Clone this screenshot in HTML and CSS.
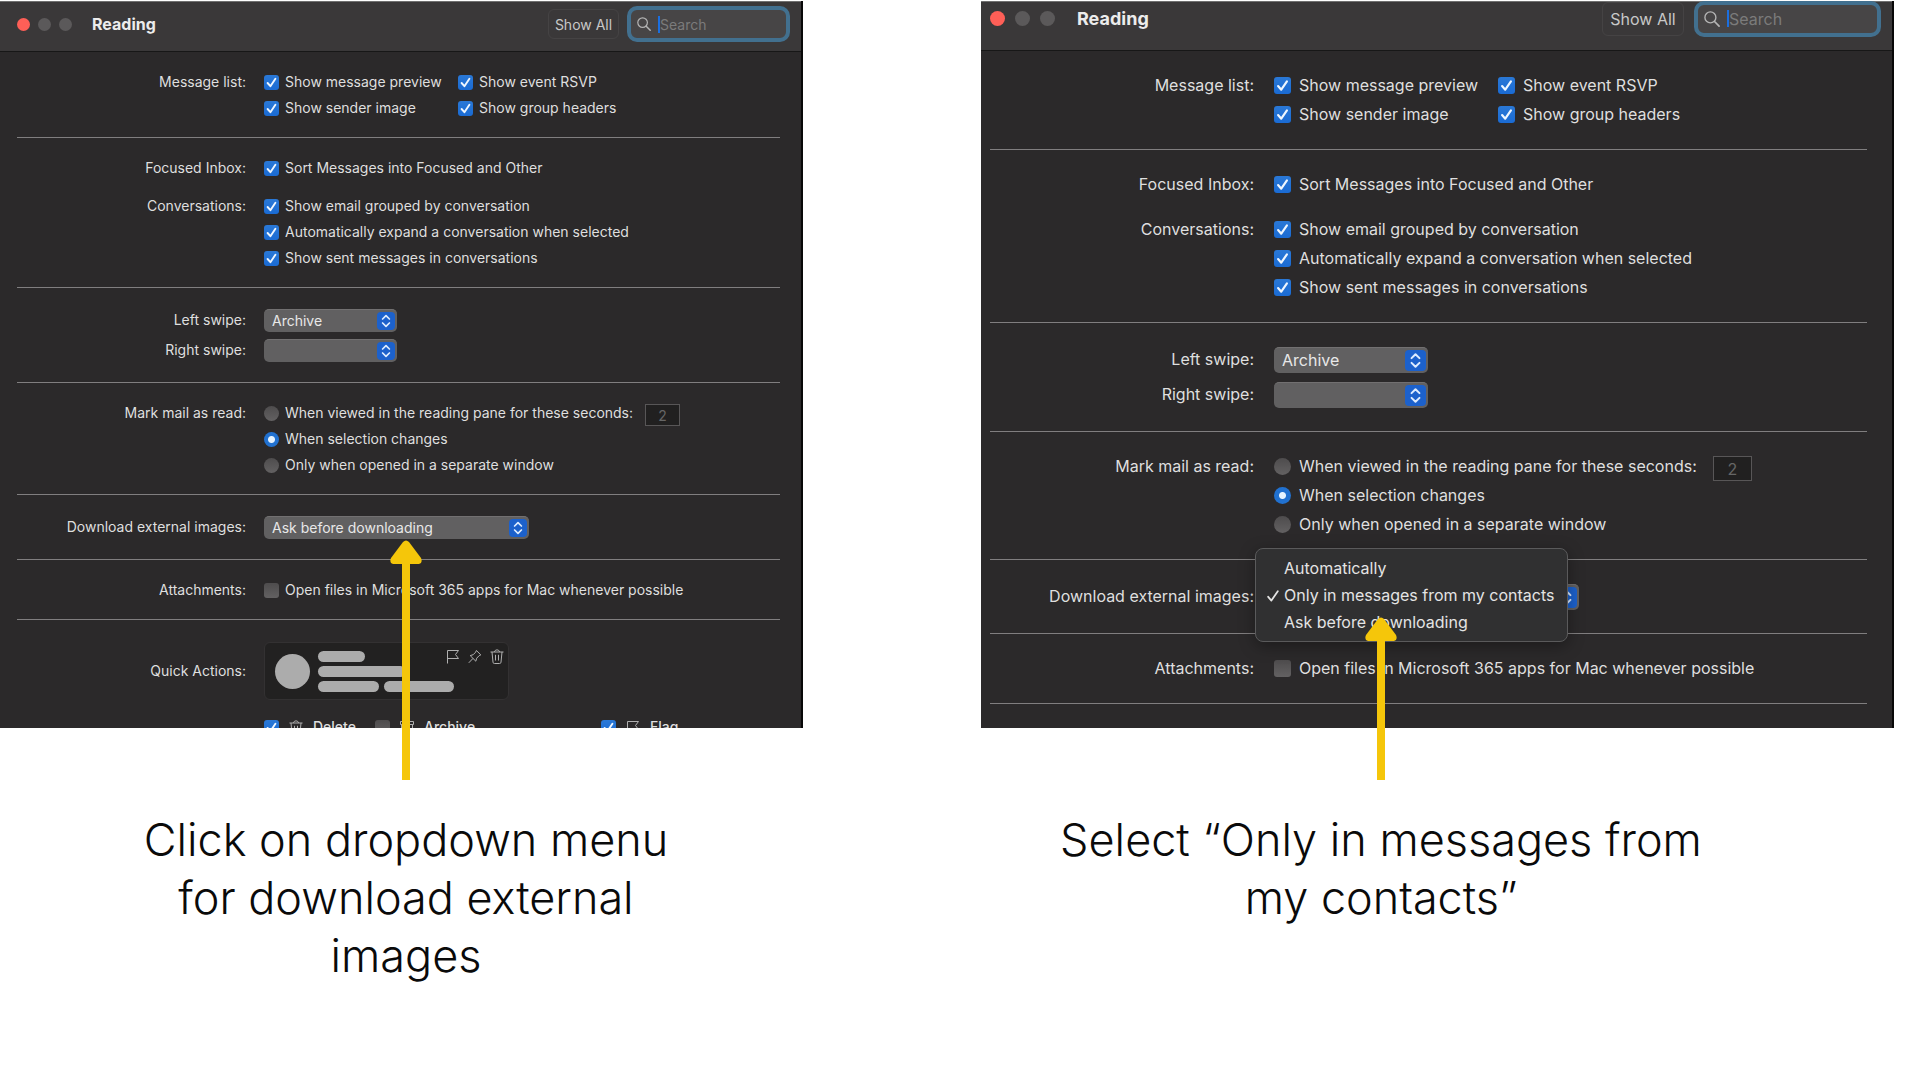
FILE: index.html
```html
<!DOCTYPE html>
<html lang="en">
<head>
  <meta charset="UTF-8">
  <title>Download external images</title>
  <meta name="viewport" content="width=device-width, initial-scale=1.0">
  <link rel="stylesheet" href="styles.css">
</head>
<body>
  <!-- shared icons -->
  <svg class="defs" width="0" height="0" aria-hidden="true">
    <symbol id="arrows" viewBox="0 0 18 18">
      <path d="M5.6 7 9 3.6 12.4 7M5.6 11 9 14.4 12.4 11" fill="none" stroke="#dcebff" stroke-width="1.7" stroke-linecap="round" stroke-linejoin="round"/>
    </symbol>
    <symbol id="glass" viewBox="0 0 14 14">
      <circle cx="5.6" cy="5.6" r="4.8" fill="none" stroke="#b4b4b4" stroke-width="1.2"/>
      <path d="M9.2 9.2 13.2 13.2" stroke="#b4b4b4" stroke-width="1.5" stroke-linecap="round"/>
    </symbol>
    <symbol id="flag" viewBox="0 0 14 15">
      <path d="M1.5 14.5V1.5H12.5L9.5 5.5 12.5 9.5H1.5" fill="none" stroke="#b0b0b0" stroke-width="1"/>
    </symbol>
    <symbol id="pin" viewBox="0 0 14 15">
      <path d="M8.4 1.5 12.8 5.9 11.2 6.6 8.7 9.2 7.8 12.2 2.2 6.6 5.2 5.7 7.7 3.1ZM5 9.4.8 13.8" fill="none" stroke="#b0b0b0" stroke-width="1" stroke-linejoin="round"/>
    </symbol>
    <symbol id="trash" viewBox="0 0 14 15">
      <path d="M.5 3H13.5M4.5 3C4.5.2 9.5.2 9.5 3M2 3 3 13.2Q3.1 14.5 4.4 14.5H9.6Q10.9 14.5 11 13.2L12 3M5.5 5.8V11.5M8.5 5.8V11.5" fill="none" stroke="#b0b0b0" stroke-width="1"/>
    </symbol>
    <symbol id="box" viewBox="0 0 14 15">
      <path d="M.5 1.5H13.5V4.5H.5ZM1.5 4.5V13.5H12.5V4.5M5 7.5H9" fill="none" stroke="#b0b0b0" stroke-width="1"/>
    </symbol>
  </svg>

  <main class="steps">
    <section class="step step-open">
      <div class="window">
        <header class="titlebar">
          <span class="dot close"></span><span class="dot"></span><span class="dot"></span>
          <h2>Reading</h2>
          <button type="button" class="show-all">Show All</button>
          <label class="search">
            <svg class="glass"><use href="#glass"/></svg>
            <span class="caret"></span>
            <input type="text" placeholder="Search" aria-label="Search">
          </label>
        </header>

        <div class="settings">
          <div class="group">
            <span class="name">Message list:</span>
            <div class="options two">
              <label><input type="checkbox" checked>Show message preview</label>
              <label><input type="checkbox" checked>Show event RSVP</label>
              <label><input type="checkbox" checked>Show sender image</label>
              <label><input type="checkbox" checked>Show group headers</label>
            </div>
          </div>

          <div class="group">
            <span class="name">Focused Inbox:</span>
            <div class="options">
              <label><input type="checkbox" checked>Sort Messages into Focused and Other</label>
            </div>
            <span class="name">Conversations:</span>
            <div class="options">
              <label><input type="checkbox" checked>Show email grouped by conversation</label>
              <label><input type="checkbox" checked>Automatically expand a conversation when selected</label>
              <label><input type="checkbox" checked>Show sent messages in conversations</label>
            </div>
          </div>

          <div class="group popups">
            <label class="name" for="left-a">Left swipe:</label>
            <span class="popup"><select id="left-a"><option>Archive</option></select><svg class="arrows"><use href="#arrows"/></svg></span>
            <label class="name" for="right-a">Right swipe:</label>
            <span class="popup"><select id="right-a"><option></option></select><svg class="arrows"><use href="#arrows"/></svg></span>
          </div>

          <div class="group">
            <span class="name">Mark mail as read:</span>
            <div class="options">
              <div class="line">
                <label><input type="radio" name="read-a">When viewed in the reading pane for these seconds:</label>
                <input type="text" class="seconds" value="2" aria-label="Seconds" disabled>
              </div>
              <label><input type="radio" name="read-a" checked>When selection changes</label>
              <label><input type="radio" name="read-a">Only when opened in a separate window</label>
            </div>
          </div>

          <div class="group popups">
            <label class="name" for="images-a">Download external images:</label>
            <span class="popup wide"><select id="images-a"><option>Ask before downloading</option></select><svg class="arrows"><use href="#arrows"/></svg></span>
          </div>

          <div class="group">
            <span class="name">Attachments:</span>
            <div class="options">
              <label><input type="checkbox">Open files in Microsoft 365 apps for Mac whenever possible</label>
            </div>
          </div>

          <div class="group quick">
            <span class="name">Quick Actions:</span>
            <div class="preview">
              <span class="avatar"></span>
              <span class="bars"><i class="short"></i><i class="long"></i><span><i class="mid"></i><i class="last"></i></span></span>
              <span class="actions">
                <svg class="icon"><use href="#flag"/></svg>
                <svg class="icon"><use href="#pin"/></svg>
                <svg class="icon"><use href="#trash"/></svg>
              </span>
            </div>
            <div class="cut">
              <label><input type="checkbox" checked><svg class="icon"><use href="#trash"/></svg>Delete</label>
              <label><input type="checkbox"><svg class="icon"><use href="#box"/></svg>Archive</label>
              <label><input type="checkbox" checked><svg class="icon"><use href="#flag"/></svg>Flag</label>
            </div>
          </div>
        </div>
      </div>
      <svg class="pointer" viewBox="0 0 32 240">
        <path d="M12 240V24H3Q-1 23 1 18L13 2Q16-1 19 2L31 18Q33 23 29 24H20V240Z" fill="#f5c60a"/>
      </svg>
      <p class="caption">Click on dropdown menu<br>for download external<br>images</p>
    </section>

    <section class="step step-select">
      <div class="window">
        <header class="titlebar">
          <span class="dot close"></span><span class="dot"></span><span class="dot"></span>
          <h2>Reading</h2>
          <button type="button" class="show-all">Show All</button>
          <label class="search">
            <svg class="glass"><use href="#glass"/></svg>
            <span class="caret"></span>
            <input type="text" placeholder="Search" aria-label="Search">
          </label>
        </header>

        <div class="settings">
          <div class="group">
            <span class="name">Message list:</span>
            <div class="options two">
              <label><input type="checkbox" checked>Show message preview</label>
              <label><input type="checkbox" checked>Show event RSVP</label>
              <label><input type="checkbox" checked>Show sender image</label>
              <label><input type="checkbox" checked>Show group headers</label>
            </div>
          </div>

          <div class="group">
            <span class="name">Focused Inbox:</span>
            <div class="options">
              <label><input type="checkbox" checked>Sort Messages into Focused and Other</label>
            </div>
            <span class="name">Conversations:</span>
            <div class="options">
              <label><input type="checkbox" checked>Show email grouped by conversation</label>
              <label><input type="checkbox" checked>Automatically expand a conversation when selected</label>
              <label><input type="checkbox" checked>Show sent messages in conversations</label>
            </div>
          </div>

          <div class="group popups">
            <label class="name" for="left-b">Left swipe:</label>
            <span class="popup"><select id="left-b"><option>Archive</option></select><svg class="arrows"><use href="#arrows"/></svg></span>
            <label class="name" for="right-b">Right swipe:</label>
            <span class="popup"><select id="right-b"><option></option></select><svg class="arrows"><use href="#arrows"/></svg></span>
          </div>

          <div class="group">
            <span class="name">Mark mail as read:</span>
            <div class="options">
              <div class="line">
                <label><input type="radio" name="read-b">When viewed in the reading pane for these seconds:</label>
                <input type="text" class="seconds" value="2" aria-label="Seconds" disabled>
              </div>
              <label><input type="radio" name="read-b" checked>When selection changes</label>
              <label><input type="radio" name="read-b">Only when opened in a separate window</label>
            </div>
          </div>

          <div class="group popups">
            <label class="name" for="images-b">Download external images:</label>
            <div class="popup wide">
              <select id="images-b"><option></option></select><svg class="arrows"><use href="#arrows"/></svg>
              <ul class="menu" role="menu">
                <li role="menuitem">Automatically</li>
                <li role="menuitem" class="checked">
                  <svg class="tick" viewBox="0 0 12 12"><path d="M1.2 6.8 4.4 10.6 10.8 1.2" fill="none" stroke="#e4e4e4" stroke-width="1.8" stroke-linecap="round" stroke-linejoin="round"/></svg>
                  Only in messages from my contacts
                </li>
                <li role="menuitem">Ask before downloading</li>
              </ul>
            </div>
          </div>

          <div class="group">
            <span class="name">Attachments:</span>
            <div class="options">
              <label><input type="checkbox">Open files in Microsoft 365 apps for Mac whenever possible</label>
            </div>
          </div>
        </div>
      </div>
      <svg class="pointer" viewBox="0 0 32 163">
        <path d="M12 163V24H3Q-1 23 1 18L13 2Q16-1 19 2L31 18Q33 23 29 24H20V163Z" fill="#f5c60a"/>
      </svg>
      <p class="caption">Select “Only in messages from<br>my contacts”</p>
    </section>
  </main>
</body>
</html>
```
FILE: styles.css
```css
* {
  box-sizing: border-box;
}

body {
  margin: 0;
  background: #fff;
  font-family: Inter, "Liberation Sans", sans-serif;
}

.defs {
  display: block;
}

.steps {
  display: grid;
  grid-template-columns: 803fr 913fr;
  column-gap: 178px;
  padding: 1px 26px 0 0;
}

.step {
  position: relative;
  display: grid;
  grid-template-rows: 1fr auto;
}

/* left window */
.step-open {
  --text: 14px;
  --title: 16px;
  --bar: 51px;
  --bar-pad: 5px;
  --side: 17px;
  --right: 21px;
  --dot: 13px;
  --dot-gap: 8px;
  --label: 229px;
  --label-gap: 18px;
  --row: 22px;
  --row-gap: 4px;
  --group-gap: 16px;
  --pad-top: 19px;
  --pad-bottom: 18px;
  --popup-pad: 21px;
  --popup-gap: 8px;
  --popup: 133px;
  --popup-wide: 265px;
  --column: 194px;
  --check: 15px;
  --check-gap: 6px;
  --seconds-gap: 12px;
  --search: 163px;
  --button: 71px;
  --button-height: 30px;
  --mark: 406px;
  --pointer: 240px;
}

/* right window, a bit larger */
.step-select {
  --text: 16px;
  --title: 18px;
  --bar: 50px;
  --bar-pad: 15px;
  --side: 9px;
  --right: 25px;
  --dot: 15px;
  --dot-gap: 10px;
  --label: 264px;
  --label-gap: 20px;
  --row: 25px;
  --row-gap: 4px;
  --group-gap: 20px;
  --pad-top: 22px;
  --pad-bottom: 22px;
  --popup-pad: 24px;
  --popup-gap: 10px;
  --popup: 154px;
  --popup-wide: 305px;
  --column: 224px;
  --check: 17px;
  --check-gap: 8px;
  --seconds-gap: 16px;
  --search: 187px;
  --button: 82px;
  --button-height: 34px;
  --mark: 400px;
  --pointer: 163px;
}

.window {
  overflow: hidden;
  background: #2b292a;
  border-right: 2px solid #080808;
  color: #dfdfdf;
  font-size: var(--text);
}

.titlebar {
  display: flex;
  align-items: center;
  gap: var(--dot-gap);
  height: var(--bar);
  padding: 0 11px var(--bar-pad) var(--side);
  background: #3a3839;
  border-top: 1px solid #707070;
  border-bottom: 1px solid #171717;
}

.dot {
  width: var(--dot);
  height: var(--dot);
  border-radius: 50%;
  background: #5b595a;
}

.dot.close {
  background: #fe5f57;
}

.titlebar h2 {
  margin: 0 auto 0 12px;
  font-size: var(--title);
  font-weight: 700;
  color: #ececec;
}

.show-all {
  width: var(--button);
  height: var(--button-height);
  padding: 0;
  border: 1px solid #454344;
  border-radius: 6px;
  background: none;
  color: #c8c8c8;
  font: inherit;
}

.search {
  display: flex;
  align-items: center;
  width: var(--search);
  height: 36px;
  flex: none;
  padding-left: 6px;
  border: 4px solid #42708f;
  border-radius: 10px;
  background: #474546;
}

.glass {
  width: 14px;
  height: 14px;
  flex: none;
}

.step-select .glass {
  width: 16px;
  height: 16px;
}

.caret {
  width: 2px;
  height: 17px;
  margin-left: 7px;
  background: #1b6fe0;
}

.search input {
  flex: 1;
  min-width: 0;
  padding: 0;
  border: 0;
  outline: 0;
  background: none;
  color: #dfdfdf;
  font: inherit;
}

.search input::placeholder {
  color: #7b7b7b;
}

.settings {
  padding: 0 var(--right) 0 var(--side);
}

.group {
  display: grid;
  grid-template-columns: var(--label) 1fr;
  column-gap: var(--label-gap);
  row-gap: var(--group-gap);
  padding: var(--pad-top) 0 var(--pad-bottom);
  border-bottom: 1px solid #807e7f;
  line-height: var(--row);
  white-space: nowrap;
}

.group.popups {
  row-gap: var(--popup-gap);
  padding: var(--popup-pad) 0;
}

.name {
  text-align: right;
}

.options {
  display: grid;
  row-gap: var(--row-gap);
}

.options.two {
  grid-template-columns: var(--column) 1fr;
}

.options label,
.cut label {
  display: flex;
  align-items: center;
  gap: var(--check-gap);
}

.line {
  display: flex;
  align-items: center;
  gap: var(--seconds-gap);
  height: var(--row);
}

input[type="checkbox"],
input[type="radio"] {
  appearance: none;
  width: var(--check);
  height: var(--check);
  flex: none;
  margin: 0;
  border-radius: 3px;
  background: linear-gradient(#4e4c4d, #636162);
}

input[type="radio"] {
  border-radius: 50%;
}

input[type="checkbox"]:checked {
  background: url("data:image/svg+xml,%3Csvg xmlns='http://www.w3.org/2000/svg' viewBox='0 0 15 15'%3E%3Cpath d='M3.6 8 6.4 11.2 11.4 3.8' fill='none' stroke='%23eef6ff' stroke-width='1.9' stroke-linecap='round' stroke-linejoin='round'/%3E%3C/svg%3E") center / 100%, linear-gradient(#2a78d6, #1a6bd4);
}

input[type="radio"]:checked {
  background: radial-gradient(circle, #e6f3ff 0 3px, #2171d0 4px);
}

.seconds {
  width: 35px;
  height: 22px;
  margin-top: 3px;
  padding: 2px 0 0;
  border: 1px solid #585657;
  background: #212020;
  color: #666;
  font: inherit;
  text-align: center;
}

.step-select .seconds {
  width: 39px;
  height: 25px;
}

.popup {
  position: relative;
  display: grid;
  width: var(--popup);
  height: var(--row);
}

.popup.wide {
  width: var(--popup-wide);
}

.popup select {
  grid-area: 1 / 1;
  appearance: none;
  width: 100%;
  padding: 0 24px 0 8px;
  border: 0;
  border-top: 1px solid #727071;
  border-radius: 5px;
  background: #616061;
  color: #e8e8e8;
  font: inherit;
}

.arrows {
  grid-area: 1 / 1;
  place-self: center end;
  width: calc(var(--row) - 4px);
  height: calc(var(--row) - 4px);
  margin-right: 2px;
  border-radius: 4px;
  background: #1c61cc;
  pointer-events: none;
}

.menu {
  position: absolute;
  left: -19px;
  top: -36px;
  width: 313px;
  margin: 0;
  padding: 6px 12px 5px 28px;
  border: 1px solid #5a5a5b;
  border-radius: 8px;
  background: #303031;
  box-shadow: 0 4px 16px rgba(0, 0, 0, 0.35);
  color: #e4e4e4;
  line-height: 27px;
  list-style: none;
}

.menu li {
  position: relative;
}

.tick {
  position: absolute;
  left: -17px;
  top: 8px;
  width: 12px;
  height: 12px;
}

.quick {
  padding: 22px 0 0;
  border: 0;
}

.quick .name {
  align-self: center;
}

.preview {
  display: flex;
  align-items: center;
  gap: 8px;
  width: 245px;
  height: 58px;
  padding-left: 10px;
  border: 1px solid #333132;
  border-radius: 6px;
  background: #222121;
}

.avatar {
  width: 35px;
  height: 35px;
  flex: none;
  border-radius: 50%;
  background: #acacac;
}

.bars {
  display: grid;
  gap: 4px;
}

.bars span {
  display: flex;
  gap: 5px;
}

.bars i {
  height: 11px;
  border-radius: 6px;
  background: #acacac;
}

.bars .short {
  width: 47px;
}

.bars .long {
  width: 88px;
}

.bars .mid {
  width: 61px;
}

.bars .last {
  width: 70px;
}

.actions {
  display: flex;
  gap: 8px;
  align-self: start;
  margin: 6px 0 0 -16px;
}

.icon {
  width: 14px;
  height: 15px;
  flex: none;
}

/* the list goes on below the window's edge */
.cut {
  grid-column: 2;
  display: grid;
  grid-template-columns: 111px 226px 1fr;
  height: 12px;
  overflow: hidden;
  font-weight: 500;
}

.cut label {
  height: var(--row);
  gap: 10px;
}

.pointer {
  position: absolute;
  left: calc(var(--mark) - 16px);
  top: calc(779px - var(--pointer));
  width: 32px;
  height: var(--pointer);
}

.caption {
  width: 660px;
  height: 174px;
  margin: 83px 0 0 calc(var(--mark) - 330px);
  color: #0a0a0a;
  font-size: 45px;
  font-weight: 300;
  line-height: 58px;
  text-align: center;
}
```
